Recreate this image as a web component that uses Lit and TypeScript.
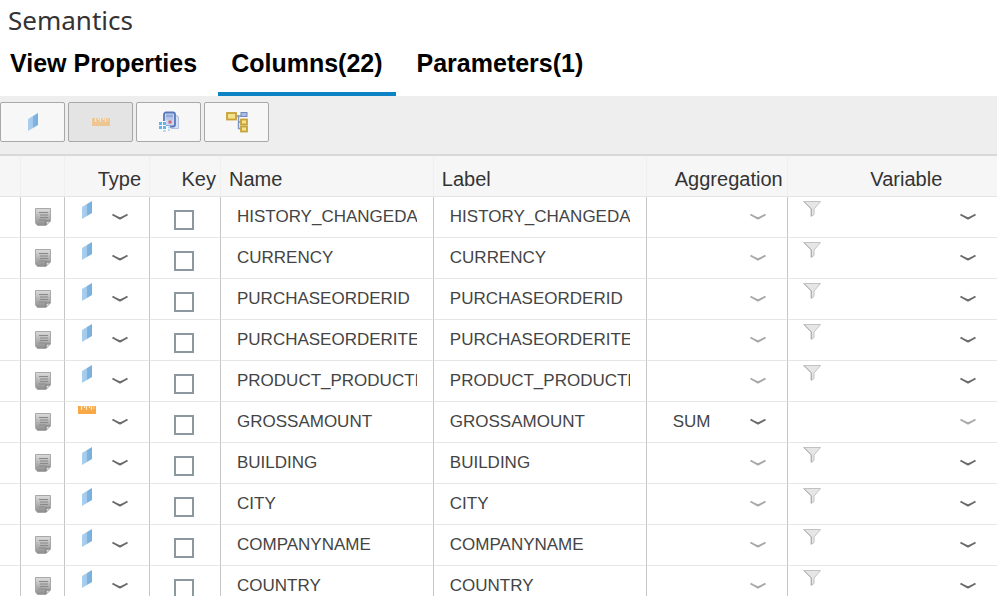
import { LitElement, html, css, svg, nothing } from "lit";
import { customElement, state } from "lit/decorators.js";

interface Column {
  name: string;
  measure?: boolean;
}

const COLUMNS: Column[] = [
  { name: "HISTORY_CHANGEDAT" },
  { name: "CURRENCY" },
  { name: "PURCHASEORDERID" },
  { name: "PURCHASEORDERITEM" },
  { name: "PRODUCT_PRODUCTID" },
  { name: "GROSSAMOUNT", measure: true },
  { name: "BUILDING" },
  { name: "CITY" },
  { name: "COMPANYNAME" },
  { name: "COUNTRY" },
];

const TABS = ["View Properties", "Columns(22)", "Parameters(1)"];

const attributeIcon = html`<svg class="icon" width="12" height="20" viewBox="0 0 12 20" aria-hidden="true">
  <defs>
    <linearGradient id="blue" x1="0" x2="1" y1="0" y2="0">
      <stop offset="0" stop-color="#a9d0f0" />
      <stop offset="0.45" stop-color="#a3caec" />
      <stop offset="0.55" stop-color="#7fb4e0" />
      <stop offset="1" stop-color="#78afdd" />
    </linearGradient>
  </defs>
  <path d="M1 7 L11 1 V13 L1 19 Z" fill="url(#blue)" />
</svg>`;

const measureIcon = html`<svg class="icon" width="20" height="10" viewBox="0 0 20 10" aria-hidden="true">
  <rect x="1" y="1" width="18" height="8" fill="#f8a945" />
  <path d="M4.5 1 V5 M7.5 1 V3 M9.5 1 V5 M12.5 1 V3 M14.5 1 V5" stroke="#fdeacb" stroke-width="1.2" />
  <path d="M17 1 V4" stroke="#fbd39b" />
</svg>`;

const semanticsIcon = html`<svg width="24" height="22" viewBox="0 0 24 22" aria-hidden="true">
  <path d="M17 4.5 H19 Q21.5 4.5 21.5 7 V17.5 H14 V15" fill="#d9e1f2" stroke="#b3c1e0" />
  <rect x="7" y="1.5" width="11" height="14" rx="2" fill="#cbd7f0" stroke="#5878bb" stroke-width="1.8" />
  <rect x="9" y="3.5" width="7" height="3" fill="#93aadb" />
  <path d="M9 8 H16" stroke="#a8b9df" />
  <rect x="11.5" y="9.5" width="3" height="3" fill="#cc6676" />
  <path d="M1 10 H9 V15 H13 V20 H1 Z" fill="#f7f7f7" />
  <g fill="#62b5ec">
    <rect x="2" y="11" width="3" height="3" /><rect x="6" y="11" width="3" height="3" />
    <rect x="2" y="15" width="3" height="3" /><rect x="6" y="15" width="3" height="3" />
  </g>
  <path d="M6 20 H9 M11 19 H13 M11 16.5 H13" stroke="#a3d5f4" stroke-width="1.6" />
</svg>`;

const hierarchyIcon = html`<svg width="24" height="22" viewBox="0 0 24 22" aria-hidden="true">
  <path d="M11 5 H16 M13.5 5 V17.5 H16 M13.5 11 H16" fill="none" stroke="#7d95c2" stroke-width="1.4" />
  <rect x="2" y="2" width="9" height="6.5" fill="#f5e28d" stroke="#c6a238" stroke-width="1.8" />
  <rect x="16" y="1.5" width="6" height="4" fill="#a9bce2" stroke="#7389bd" />
  <rect x="16" y="8.5" width="6" height="5" fill="#f5e28d" stroke="#c6a238" stroke-width="1.8" />
  <rect x="16" y="15.5" width="6" height="5" fill="#f5e28d" stroke="#c6a238" stroke-width="1.8" />
</svg>`;

const documentIcon = html`<svg class="icon" width="18" height="20" viewBox="0 0 18 20" aria-hidden="true">
  <defs>
    <linearGradient id="grey" x1="0" x2="0" y1="0" y2="1">
      <stop offset="0" stop-color="#dcdcdc" />
      <stop offset="1" stop-color="#8c8c8c" />
    </linearGradient>
  </defs>
  <path d="M1.5 1.5 H16.5 V14 L12 18.5 H3.5 L1.5 16 Z" fill="url(#grey)" stroke="#a8a8a8" />
  <path d="M5 5.5 H14 M6 8 H14 M6 10.5 H14 M5 13 H12" stroke="#8a8a8a" />
  <path d="M16 14 H12 V18" fill="#dedede" stroke="#777" />
</svg>`;

const filterIcon = html`<svg class="icon" width="20" height="18" viewBox="0 0 20 18" aria-hidden="true">
  <path d="M1.5 1.5 H18.5 L12 9 V14.5 L9 16.5 V9 Z" fill="#e6e6e6" stroke="#c2c2c2" />
  <path d="M2.5 2 L9.5 9 V16" fill="none" stroke="#b0b0b0" />
</svg>`;

@customElement("app-root")
export class AppRoot extends LitElement {
  @state() private tab = 1;

  static styles = css`
    :host {
      display: block;
      height: 100vh;
      overflow: hidden;
      background: #fff;
      color: #333;
      font-family: "Liberation Sans", Arial, sans-serif;
    }
    h1 {
      margin: 0;
      padding: 2px 8px 0;
      font: 400 26px/36px "Noto Sans", "Open Sans", sans-serif;
    }
    .tabs {
      display: flex;
      gap: 8px;
      height: 58px;
    }
    .tab {
      padding: 0 13px 4px;
      border: 0;
      border-bottom: 4px solid transparent;
      background: none;
      color: #000;
      font: 700 25px/30px "Liberation Sans", Arial, sans-serif;
    }
    .tab:first-child {
      padding-left: 10px;
    }
    .tab.active {
      border-color: #0c83c4;
    }
    .toolbar {
      display: flex;
      gap: 3px;
      padding: 6px 0 12px;
      background: #eee;
      border-bottom: 2px solid #d8d8d8;
    }
    .tool {
      display: flex;
      align-items: center;
      justify-content: center;
      width: 65px;
      height: 40px;
      padding: 0;
      border: 1px solid #a8a8a8;
      border-radius: 2px;
      background: #f7f7f7;
    }
    .tool:disabled {
      background: #e4e4e4;
    }
    .tool:disabled .icon {
      opacity: 0.5;
    }
    table {
      width: 100%;
      table-layout: fixed;
      border-collapse: separate;
      border-spacing: 0;
    }
    .c-gap { width: 21px; }
    .c-doc { width: 44px; }
    .c-type { width: 85px; }
    .c-key { width: 71px; }
    .c-agg { width: 141px; }
    .c-var { width: 21%; }
    th {
      box-sizing: border-box;
      height: 41px;
      padding: 6px 8px 0;
      background: #f6f6f6;
      border-right: 1px solid #f0f0f0;
      border-bottom: 1px solid #e4e4e4;
      font-size: 20px;
      line-height: 24px;
      font-weight: 400;
      text-align: left;
      white-space: nowrap;
    }
    th.end {
      text-align: right;
      padding: 6px 4px 0;
    }
    th.type {
      padding-right: 8px;
    }
    th.mid {
      text-align: center;
      padding-left: 36px;
    }
    td {
      box-sizing: border-box;
      height: 41px;
      padding: 0;
      border-right: 1px solid #c6c6c6;
      border-bottom: 1px solid #e6e6e6;
    }
    th:last-child,
    td:last-child {
      border-right: 0;
    }
    .cell {
      display: flex;
      align-items: center;
      height: 40px;
    }
    .doc {
      justify-content: center;
    }
    .icon {
      display: block;
      flex: none;
    }
    .corner {
      flex: none;
      width: 20px;
      align-self: flex-start;
      display: flex;
      justify-content: center;
      padding-top: 3px;
    }
    .type {
      padding: 0 20px 0 12px;
    }
    .variable {
      padding: 0 20px 0 14px;
    }
    .agg {
      padding: 0 20px 0 26px;
    }
    .pick {
      display: grid;
      flex: 1;
      align-items: center;
      justify-items: end;
    }
    .pick > * {
      grid-area: 1 / 1;
    }
    .pick svg {
      pointer-events: none;
      color: #6a6a6a;
    }
    .pick.off svg {
      color: #a8a8a8;
    }
    select {
      appearance: none;
      width: 100%;
      height: 32px;
      padding: 0;
      border: 0;
      background: none;
      color: #444;
      opacity: 1;
      font: 17px/24px "Liberation Sans", Arial, sans-serif;
    }
    .key {
      padding: 5px 0 0 24px;
      box-sizing: border-box;
    }
    .key input {
      appearance: none;
      width: 20px;
      height: 20px;
      margin: 0;
      border: 2px solid #8b989f;
      background: #fff;
    }
    .text {
      padding: 0 16px;
    }
    .text input {
      width: 100%;
      height: 24px;
      padding: 0;
      border: 0;
      background: none;
      color: #444;
      font: 17px/24px "Liberation Sans", Arial, sans-serif;
    }
  `;

  private pick(label: string, value: string, off: boolean) {
    return html`<div class="pick ${off ? "off" : ""}">
      <select aria-label=${label} ?disabled=${off}>
        <option>${value}</option>
      </select>
      <svg width="18" height="8" viewBox="0 0 18 8" aria-hidden="true">
        ${svg`<path d="M1.5 1.5 Q4 3 9 5.5 Q14 3 16.5 1.5" fill="none" stroke="currentColor" stroke-width="2" />`}
      </svg>
    </div>`;
  }

  private row(c: Column) {
    return html`<tr>
      <td></td>
      <td><div class="cell doc">${documentIcon}</div></td>
      <td>
        <div class="cell type">
          <span class="corner">${c.measure ? measureIcon : attributeIcon}</span>
          ${this.pick(`Type of ${c.name}`, "", false)}
        </div>
      </td>
      <td><div class="cell key"><input type="checkbox" aria-label="Key ${c.name}" /></div></td>
      <td><div class="cell text"><input type="text" aria-label="Name" .value=${c.name} /></div></td>
      <td><div class="cell text"><input type="text" aria-label="Label" .value=${c.name} /></div></td>
      <td><div class="cell agg">${this.pick("Aggregation", c.measure ? "SUM" : "", !c.measure)}</div></td>
      <td>
        <div class="cell variable">
          <span class="corner">${c.measure ? nothing : filterIcon}</span>
          ${this.pick("Variable", "", !!c.measure)}
        </div>
      </td>
    </tr>`;
  }

  render() {
    return html`
      <h1>Semantics</h1>
      <div class="tabs" role="tablist">
        ${TABS.map(
          (t, i) => html`<button
            class="tab ${i === this.tab ? "active" : ""}"
            role="tab"
            aria-selected=${i === this.tab}
            @click=${() => (this.tab = i)}
          >${t}</button>`
        )}
      </div>
      <div class="toolbar">
        <button class="tool" aria-label="Attribute">${attributeIcon}</button>
        <button class="tool" aria-label="Measure" disabled>${measureIcon}</button>
        <button class="tool" aria-label="Assign semantics">${semanticsIcon}</button>
        <button class="tool" aria-label="Hierarchies">${hierarchyIcon}</button>
      </div>
      <table>
        <colgroup>
          <col class="c-gap" /><col class="c-doc" /><col class="c-type" /><col class="c-key" />
          <col /><col /><col class="c-agg" /><col class="c-var" />
        </colgroup>
        <thead>
          <tr>
            <th></th><th></th>
            <th class="end type">Type</th>
            <th class="end">Key</th>
            <th>Name</th>
            <th>Label</th>
            <th class="end">Aggregation</th>
            <th class="mid">Variable</th>
          </tr>
        </thead>
        <tbody>${COLUMNS.map((c) => this.row(c))}</tbody>
      </table>
    `;
  }
}
